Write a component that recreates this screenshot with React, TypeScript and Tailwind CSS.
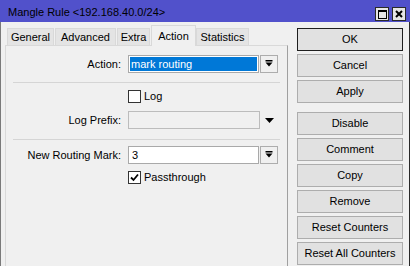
import React from 'react';

function DropButton() {
  return (
    <div className="ml-[1px] flex h-[18px] w-[18px] items-center justify-center border border-[#adadad] bg-[#f0f0f0]">
      <svg width="8" height="8" viewBox="0 0 8 8">
        <rect x="0.5" y="0" width="7" height="1.5" fill="#000" />
        <polygon points="0.5,2.5 7.5,2.5 4,6.5" fill="#000" />
      </svg>
    </div>
  );
}

function CheckBox({ checked }: { checked?: boolean }) {
  return (
    <div className="flex h-[13px] w-[13px] items-center justify-center border border-[#333333] bg-white">
      {checked && (
        <svg width="9" height="9" viewBox="0 0 9 9">
          <path d="M1 4.5 L3.5 7 L8 1.5" stroke="#000" strokeWidth="1.8" fill="none" />
        </svg>
      )}
    </div>
  );
}

function Separator({ className }: { className: string }) {
  return <div className={`mx-[7px] h-px bg-[#d5d5d5] ${className}`} />;
}

function Btn({ label, className, primary }: { label: string; className?: string; primary?: boolean }) {
  return (
    <div
      className={`flex h-[23px] w-[106px] items-center justify-center bg-[#e1e1e1] text-black ${
        primary ? 'border border-[#1e1e1e]' : 'border border-[#adadad]'
      } ${className ?? ''}`}
    >
      {label}
    </div>
  );
}

export default function App() {
  const tabs = [
    { name: 'General', w: 'w-[47px]', ml: 'ml-0' },
    { name: 'Advanced', w: 'w-[61px]', ml: 'ml-[1px]' },
    { name: 'Extra', w: 'w-[33px]', ml: 'ml-[1px]' },
  ];

  return (
    <div className="h-[266px] w-[411px] overflow-hidden bg-white font-['Liberation_Sans',Arial,sans-serif] text-[11px] text-black">
      <div className="flex h-[266px] w-[410px] flex-col bg-[#f0f0f0]">
        {/* title bar */}
        <div className="flex h-[22px] shrink-0 items-start bg-[#5151cb]">
          <div className="pl-[8px] pt-[5px] leading-[14px]">Mangle Rule &lt;192.168.40.0/24&gt;</div>
          <div className="ml-auto flex gap-[3px] pr-[4px] pt-[7px]">
            <div className="flex h-[14px] w-[14px] items-center justify-center border border-[#2a2a2a] bg-[#e6e6e6]">
              <div className="h-[9px] w-[9px] border border-t-2 border-black" />
            </div>
            <div className="flex h-[14px] w-[14px] items-center justify-center border border-[#2a2a2a] bg-[#e6e6e6]">
              <svg width="8" height="8" viewBox="0 0 8 8">
                <path d="M1 1 L7 7 M7 1 L1 7" stroke="#000" strokeWidth="2" />
              </svg>
            </div>
          </div>
        </div>

        {/* body */}
        <div className="flex flex-1 border-l border-r border-l-[#7a7a7a] border-r-[#2a2a2a]">
          {/* left: tabs + panel */}
          <div className="flex flex-col pl-[4px]">
            <div className="mt-[3px] flex h-[20px] items-end pl-[2px]">
              {tabs.map((t) => (
                <div
                  key={t.name}
                  className={`flex h-[17px] items-center justify-center border border-b-0 border-[#d9d9d9] bg-[#e4e4e4] ${t.w} ${t.ml}`}
                >
                  {t.name}
                </div>
              ))}
              <div className="relative z-10 mb-[-1px] ml-[1px] flex h-[21px] w-[45px] items-start justify-center border border-b-0 border-[#d9d9d9] bg-[#f0f0f0] pt-[2px]">
                Action
              </div>
              <div className="flex h-[17px] w-[53px] items-center justify-center border border-b-0 border-[#d9d9d9] bg-[#e4e4e4]">
                Statistics
              </div>
            </div>

            <div className="h-[230px] w-[283px] border border-[#d9d9d9] border-r-[#a0a0a0] bg-[#f0f0f0] pt-[9px]">
              {/* Action */}
              <div className="flex h-[18px] items-center">
                <div className="w-[115px] text-right">Action:</div>
                <div className="ml-[7px] h-[18px] w-[131px] border border-[#a9a9a9] bg-white p-[1px]">
                  <div className="flex h-full items-center bg-[#0078d7] pl-[1px] text-white">mark routing</div>
                </div>
                <DropButton />
              </div>

              <Separator className="mt-[9px]" />

              {/* Log */}
              <div className="mt-[7px] flex h-[13px] items-center">
                <div className="w-[122px]" />
                <CheckBox />
                <div className="ml-[3px]">Log</div>
              </div>

              {/* Log Prefix */}
              <div className="mt-[8px] flex h-[18px] items-center">
                <div className="w-[115px] text-right">Log Prefix:</div>
                <div className="ml-[7px] h-[18px] w-[132px] border border-[#bcbcbc] bg-[#f0f0f0]" />
                <svg className="ml-[5px]" width="9" height="5" viewBox="0 0 9 5">
                  <polygon points="0,0 9,0 4.5,5" fill="#000" />
                </svg>
              </div>

              <Separator className="mt-[10px]" />

              {/* New Routing Mark */}
              <div className="mt-[6px] flex h-[18px] items-center">
                <div className="w-[115px] text-right">New Routing Mark:</div>
                <div className="ml-[7px] flex h-[18px] w-[131px] items-center border border-[#a9a9a9] bg-white pl-[3px]">
                  3
                </div>
                <DropButton />
              </div>

              {/* Passthrough */}
              <div className="mt-[7px] flex h-[13px] items-center">
                <div className="w-[122px]" />
                <CheckBox checked />
                <div className="ml-[3px]">Passthrough</div>
              </div>
            </div>
          </div>

          {/* right: buttons */}
          <div className="ml-[9px] flex flex-col pt-[6px]">
            <Btn label="OK" primary />
            <Btn label="Cancel" className="mt-[3px]" />
            <Btn label="Apply" className="mt-[3px]" />
            <Btn label="Disable" className="mt-[9px]" />
            <Btn label="Comment" className="mt-[3px]" />
            <Btn label="Copy" className="mt-[3px]" />
            <Btn label="Remove" className="mt-[3px]" />
            <Btn label="Reset Counters" className="mt-[3px]" />
            <Btn label="Reset All Counters" className="mt-[3px]" />
          </div>
        </div>
      </div>
    </div>
  );
}
